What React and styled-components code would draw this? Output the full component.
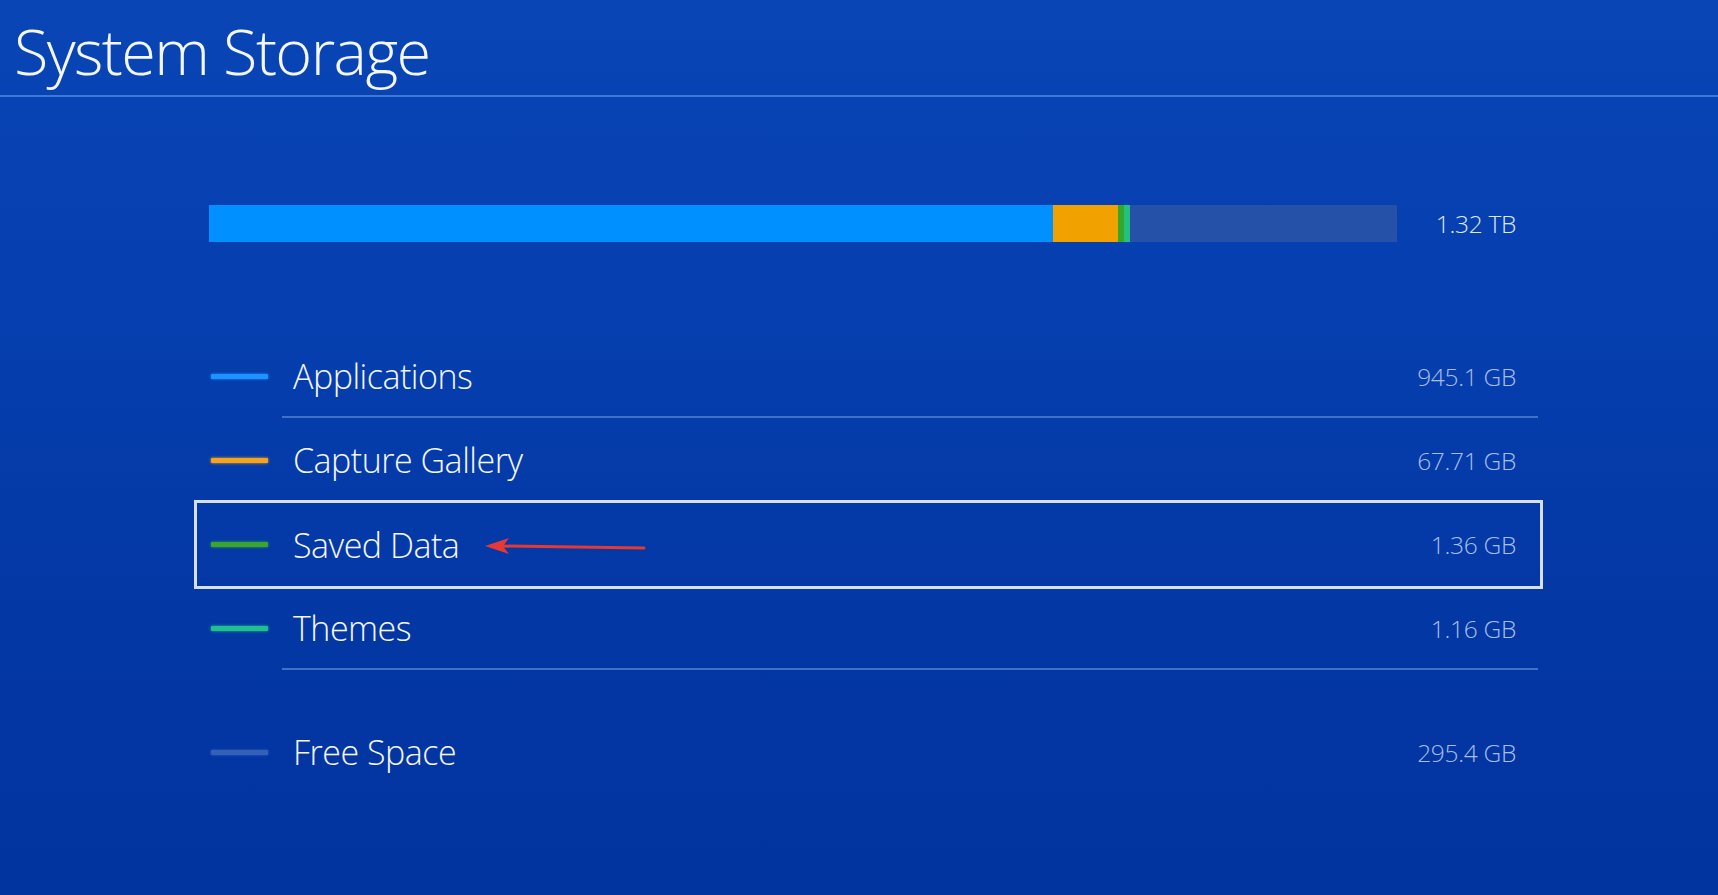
import React from "react";
import styled, { createGlobalStyle, css } from "styled-components";

const GlobalStyle = createGlobalStyle`
  html, body {
    margin: 0;
    padding: 0;
    height: 100%;
  }
  body {
    font-family: "Open Sans", "Noto Sans", sans-serif;
    background: #0337a4;
  }
`;

const Screen = styled.div`
  width: 1718px;
  height: 895px;
  overflow: hidden;
  color: #f4f7ff;
  background: linear-gradient(180deg, #0a45b5 0%, #0640b0 30%, #0337a4 70%, #02349f 100%);
`;

const Header = styled.header`
  height: 95px;
  border-bottom: 2px solid #3d78d4;
  display: flex;
  align-items: flex-end;
  padding-left: 14px;
`;

const Title = styled.h1`
  margin: 0 0 6px;
  font-size: 63px;
  font-weight: 300;
  letter-spacing: -1.6px;
  line-height: 1.2;
`;

const Main = styled.main`
  margin-left: 194px;
  width: 1349px;
  padding-top: 108px;
`;

const BarRow = styled.div`
  display: flex;
  align-items: center;
  padding: 0 27px 0 15px;
`;

const Bar = styled.div`
  width: 1188px;
  height: 37px;
  display: flex;
  background: #2551a8;
`;

const Segment = styled.div`
  height: 100%;
  background: ${({ $color }) => $color};
`;

const Total = styled.span`
  margin-left: auto;
  font-size: 24.5px;
  font-weight: 300;
  letter-spacing: -0.3px;
  color: #dfe7f8;
`;

const List = styled.div`
  margin-top: 92px;
  display: flex;
  flex-direction: column;
`;

const Row = styled.div`
  position: relative;
  height: 84px;
  box-sizing: border-box;
  display: flex;
  align-items: center;
  padding: 0 27px 0 17px;
  ${({ $selected }) =>
    $selected &&
    css`
      border: 3px solid #d6deef;
      padding: 0 24px 0 14px;
      height: 89px;
      margin: -2px 0 -3px;
    `}
  ${({ $gap }) =>
    $gap &&
    css`
      margin-top: 40px;
    `}
`;

const Swatch = styled.span`
  width: 57px;
  height: 5px;
  border-radius: 1px;
  background: ${({ $color }) => $color};
  box-shadow: 0 0 3px ${({ $color }) => $color};
  margin-right: 25px;
`;

const Label = styled.span`
  font-size: 34px;
  font-weight: 300;
  letter-spacing: -0.5px;
  color: #f4f7ff;
`;

const Value = styled.span`
  margin-left: auto;
  font-size: 24.5px;
  font-weight: 300;
  letter-spacing: -0.3px;
  color: #a9bfe8;
`;

const Divider = styled.div`
  height: 2px;
  margin: -2px 5px 0 88px;
  background: #3f71c9;
`;

const Arrow = styled.svg`
  position: absolute;
  left: 288px;
  top: 32px;
  width: 160px;
  height: 24px;
  overflow: visible;
`;

const segments = [
  { color: "#0090ff", width: 844 },
  { color: "#f1a200", width: 65 },
  { color: "#33a82c", width: 6 },
  { color: "#22c27e", width: 6 },
];

const items = [
  { label: "Applications", value: "945.1 GB", color: "#1e93ff", divider: true },
  { label: "Capture Gallery", value: "67.71 GB", color: "#f5a41c" },
  { label: "Saved Data", value: "1.36 GB", color: "#3aa52f", selected: true },
  { label: "Themes", value: "1.16 GB", color: "#1fc08e", divider: true },
  { label: "Free Space", value: "295.4 GB", color: "#3460b8", gap: true },
];

export default function App() {
  return (
    <>
      <GlobalStyle />
      <Screen>
        <Header>
          <Title>System Storage</Title>
        </Header>
        <Main>
          <BarRow>
            <Bar>
              {segments.map((s, i) => (
                <Segment key={i} $color={s.color} style={{ width: s.width }} />
              ))}
            </Bar>
            <Total>1.32 TB</Total>
          </BarRow>
          <List>
            {items.map((item) => (
              <React.Fragment key={item.label}>
                <Row $selected={item.selected} $gap={item.gap}>
                  <Swatch $color={item.color} />
                  <Label>{item.label}</Label>
                  <Value>{item.value}</Value>
                  {item.selected && (
                    <Arrow viewBox="0 0 160 24">
                      <line x1="14" y1="11" x2="159" y2="13" stroke="#e53935" strokeWidth="3" strokeLinecap="round" />
                      <path d="M0 11 L24 3 L18 11.2 L24 19 Z" fill="#e53935" />
                    </Arrow>
                  )}
                </Row>
                {item.divider && <Divider />}
              </React.Fragment>
            ))}
          </List>
        </Main>
      </Screen>
    </>
  );
}
